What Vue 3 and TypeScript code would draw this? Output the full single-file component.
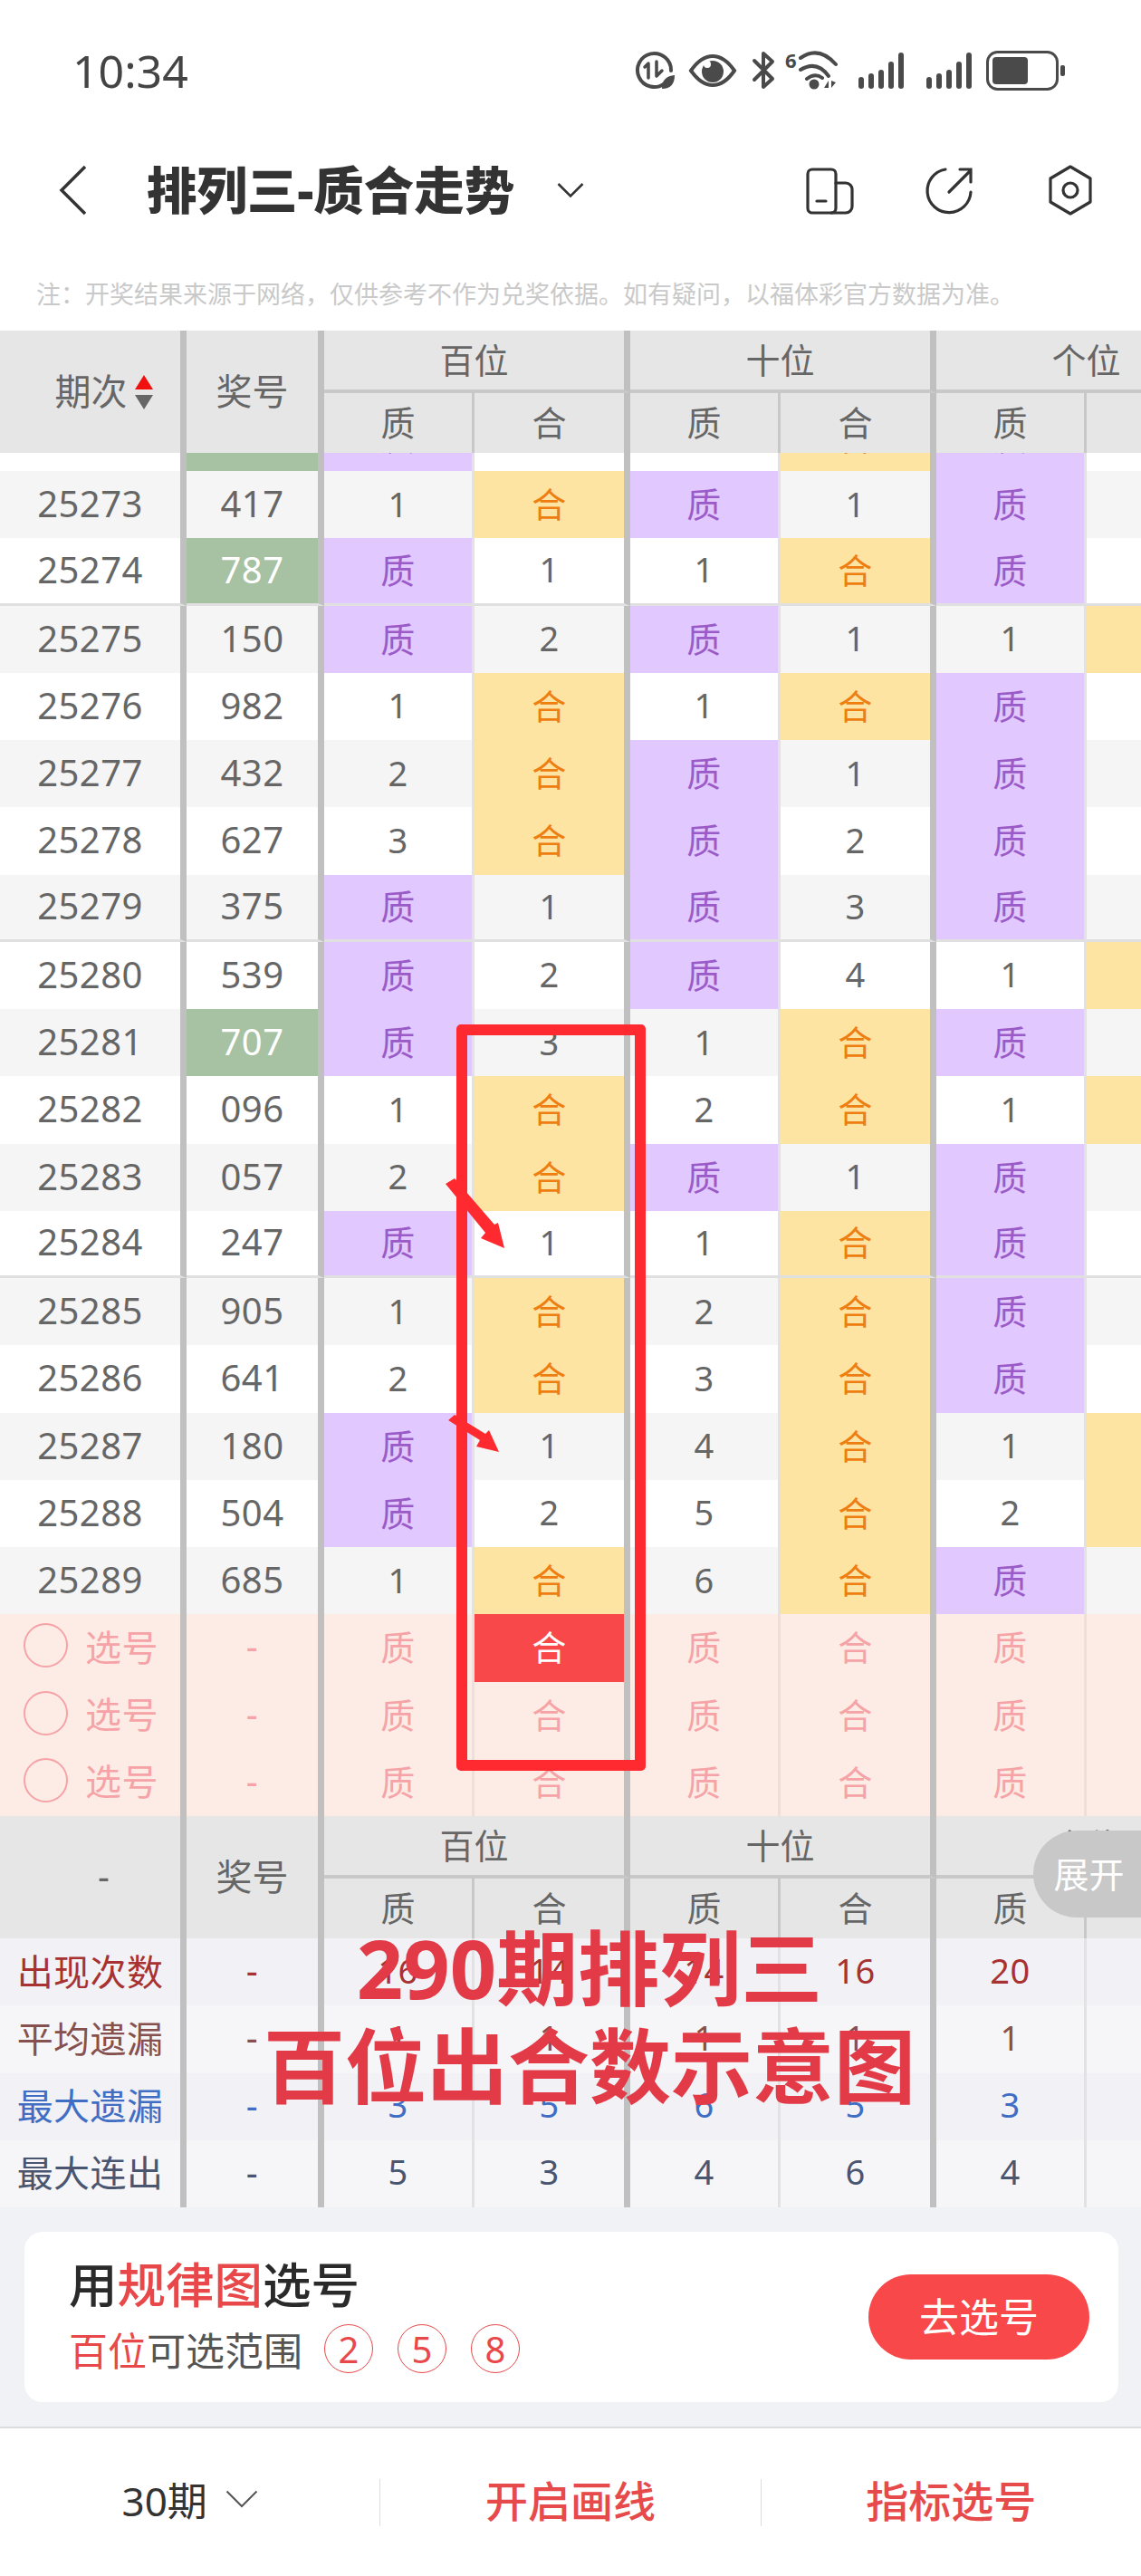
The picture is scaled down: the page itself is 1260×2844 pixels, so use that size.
<script setup lang="ts">
type Row = { no: string; prize: string; hot?: boolean; split?: boolean; cells: string[] }

const raw: [string, string, string][] = [
  ['25272', '747', '质 1 1 合 质 1'],
  ['25273', '417', '1 合 质 1 质 1'],
  ['25274', '787', '质 1 1 合 质 2'],
  ['25275', '150', '质 2 质 1 1 合'],
  ['25276', '982', '1 合 1 合 质 1'],
  ['25277', '432', '2 合 质 1 质 2'],
  ['25278', '627', '3 合 质 2 质 3'],
  ['25279', '375', '质 1 质 3 质 4'],
  ['25280', '539', '质 2 质 4 1 合'],
  ['25281', '707', '质 3 1 合 质 1'],
  ['25282', '096', '1 合 2 合 1 合'],
  ['25283', '057', '2 合 质 1 质 1'],
  ['25284', '247', '质 1 1 合 质 2'],
  ['25285', '905', '1 合 2 合 质 3'],
  ['25286', '641', '2 合 3 合 质 4'],
  ['25287', '180', '质 1 4 合 1 合'],
  ['25288', '504', '质 2 5 合 2 合'],
  ['25289', '685', '1 合 6 合 质 1'],
]

const rows: Row[] = raw.map(([no, prize, cells]) => ({
  no,
  prize,
  hot: ['747', '787', '707'].includes(prize),
  split: ['25274', '25279', '25284'].includes(no),
  cells: cells.split(' '),
}))

const groups = ['百位', '十位', '个位']
const subs = ['质', '合', '质', '合', '质', '合']
const picks = [0, 1, 2]

const stats = [
  { label: '出现次数', tone: 'red', values: ['16', '14', '14', '16', '20', '10'] },
  { label: '平均遗漏', tone: 'brown', values: ['1', '1', '1', '1', '1', '2'] },
  { label: '最大遗漏', tone: 'blue', values: ['3', '5', '6', '5', '3', '6'] },
  { label: '最大连出', tone: 'slate', values: ['5', '3', '4', '6', '4', '2'] },
]

function tint(v: string) {
  if (v === '质') return 'zhi'
  if (v === '合') return 'he'
  return ''
}
</script>

<template>
  <div class="page">
    <div class="status">
      <span class="time">10:34</span>
      <svg class="status-icons" viewBox="700 50 480 56" width="480" height="56">
        <g fill="none" stroke="#4a4a4a" stroke-width="4" stroke-linecap="round">
          <path d="M734 92 A18.5 18.5 0 1 1 741 78" />
          <path d="M716 70 V86 M716 70 L712 74 M725 68 V84 M725 84 L731 78" stroke-width="3.5" />
          <path d="M763 78 C772 65 780 62 787 62 C794 62 802 65 811 78 C802 91 794 94 787 94 C780 94 772 91 763 78Z" />
          <path d="M833 67 L853 87 L843 96 V59 L853 68 L833 88" stroke-linejoin="round" />
          <path d="M884 64 Q904 50 923 71 M884 77 Q902 66 915 84 M891 87 Q900 80 908 86" />
        </g>
        <path d="M731 98 C731 88 736 84 745 83 C745 92 741 98 731 98Z" fill="#4a4a4a" />
        <circle cx="787" cy="79" r="12" fill="#4a4a4a" />
        <circle cx="781" cy="71" r="4" fill="#fff" />
        <text x="867" y="75" class="wifi-six">6</text>
        <circle cx="899" cy="93" r="5.5" fill="#4a4a4a" />
        <path d="M910 97 L915 89 V97Z M918 89 V97 L923 91Z" fill="#4a4a4a" />
        <g fill="#4a4a4a">
          <rect x="948" y="85" width="6" height="13" rx="3" />
          <rect x="959" y="81" width="6" height="17" rx="3" />
          <rect x="970" y="77" width="6" height="21" rx="3" />
          <rect x="981" y="68" width="6" height="30" rx="3" />
          <rect x="992" y="58" width="6" height="40" rx="3" />
          <rect x="1023" y="85" width="6" height="13" rx="3" />
          <rect x="1034" y="81" width="6" height="17" rx="3" />
          <rect x="1045" y="77" width="6" height="21" rx="3" />
          <rect x="1056" y="68" width="6" height="30" rx="3" />
          <rect x="1067" y="58" width="6" height="40" rx="3" />
          <rect x="1096" y="63" width="39" height="30" rx="4" />
          <rect x="1171" y="72" width="5" height="12" rx="2" />
        </g>
        <rect x="1090.5" y="57.5" width="77" height="41" rx="11" fill="none" stroke="#4a4a4a" stroke-width="3" />
      </svg>
    </div>

    <div class="nav">
      <svg class="back" viewBox="0 0 32 56" width="32" height="56">
        <path d="M29 2 L3 28 L29 54" fill="none" stroke="#333" stroke-width="3.5" />
      </svg>
      <h1 class="title">排列三-质合走势</h1>
      <svg class="caret" viewBox="0 0 30 16" width="30" height="16">
        <path d="M1.5 1 L15 14.5 L28.5 1" fill="none" stroke="#333" stroke-width="2.5" />
      </svg>
      <div class="nav-icons">
        <svg viewBox="0 0 56 56" width="56" height="56" fill="none" stroke="#333" stroke-width="3.2" stroke-linecap="round">
          <rect x="4" y="5" width="31" height="48" rx="5" />
          <path d="M35 20 H46 A7 7 0 0 1 53 27 V46 A7 7 0 0 1 46 53 H30" />
          <path d="M14 40 H24" />
        </svg>
        <svg viewBox="0 0 56 56" width="56" height="56" fill="none" stroke="#333" stroke-width="3.2" stroke-linecap="round">
          <path d="M23 5 A24 24 0 1 0 51 30" />
          <path d="M27 30 L51 6 M39 5 H51 V19" />
        </svg>
        <svg viewBox="0 0 56 56" width="56" height="56" fill="none" stroke="#333" stroke-width="3.2" stroke-linejoin="round">
          <path d="M28 2 L50 15 V41 L28 54 L6 41 V15Z" />
          <circle cx="28" cy="28" r="8" />
        </svg>
      </div>
    </div>

    <p class="note">注：开奖结果来源于网络，仅供参考不作为兑奖依据。如有疑问，以福体彩官方数据为准。</p>

    <div class="table">
      <div class="head">
        <div class="h-side">
          <span>期次</span>
          <span class="sort"><i class="up"></i><i class="down"></i></span>
        </div>
        <div class="h-prize">奖号</div>
        <div v-for="g in groups" :key="g" class="h-group">{{ g }}</div>
        <div v-for="(s, i) in subs" :key="i" class="h-sub" :class="{ end: i % 2 === 1 }">{{ s }}</div>
      </div>

      <div class="body">
        <div v-for="r in rows" :key="r.no" class="row" :class="{ split: r.split }">
          <div class="c side">{{ r.no }}</div>
          <div class="c prize" :class="{ hot: r.hot }">{{ r.prize }}</div>
          <div
            v-for="(v, i) in r.cells"
            :key="i"
            class="c"
            :class="[tint(v), i % 2 === 1 ? 'end' : 'mid']"
          >{{ v }}</div>
        </div>
      </div>

      <div v-for="p in picks" :key="p" class="row pick">
        <div class="c side"><span class="ring"></span><span>选号</span></div>
        <div class="c prize">-</div>
        <div
          v-for="(s, i) in subs"
          :key="i"
          class="c"
          :class="[i % 2 === 1 ? 'end' : 'mid', { picked: p === 0 && i === 1 }]"
        >{{ s }}</div>
      </div>

      <div class="head">
        <div class="h-side">-</div>
        <div class="h-prize">奖号</div>
        <div v-for="g in groups" :key="g" class="h-group">{{ g }}</div>
        <div v-for="(s, i) in subs" :key="i" class="h-sub" :class="{ end: i % 2 === 1 }">{{ s }}</div>
      </div>

      <div v-for="s in stats" :key="s.label" class="row stat" :class="s.tone">
        <div class="c side">{{ s.label }}</div>
        <div class="c prize">-</div>
        <div v-for="(v, i) in s.values" :key="i" class="c" :class="i % 2 === 1 ? 'end' : 'mid'">{{ v }}</div>
      </div>
    </div>

    <div class="panel">
      <div class="card">
        <div class="card-text">
          <div class="card-title">用<em>规律图</em>选号</div>
          <div class="card-range">
            <em>百位</em>可选范围
            <span class="balls">
              <b>2</b>
              <b>5</b>
              <b>8</b>
            </span>
          </div>
        </div>
        <button class="go">去选号</button>
      </div>
    </div>

    <div class="bar">
      <div class="bar-item period">
        <span>30期</span>
        <svg viewBox="0 0 36 20" width="36" height="20">
          <path d="M1.5 1.5 L18 18 L34.5 1.5" fill="none" stroke="#555" stroke-width="2" />
        </svg>
      </div>
      <div class="bar-item link">开启画线</div>
      <div class="bar-item link">指标选号</div>
    </div>

    <div class="expand">展开</div>
    <div class="mark-box"></div>
    <svg class="mark-arrows" viewBox="480 1290 90 330" width="90" height="330">
      <path d="M492 1307 L502 1301 L546 1352 L550 1350 L557 1378 L531 1367 L536 1361Z" fill="#ff2a2f" />
      <path d="M495 1568 L502 1562 L536 1583 L540 1579 L551 1603 L526 1597 L530 1590Z" fill="#ff2a2f" />
    </svg>
    <div class="caption">290期排列三<br />百位出合数示意图</div>
  </div>
</template>

<style>
html, body { margin: 0; background: #fff; }
</style>

<style scoped>
.page {
  position: relative; width: 1260px; height: 2844px; overflow: hidden; background: #fff;
  font-family: "Noto Sans", "Noto Sans CJK SC", sans-serif; color: #666;
}

.status { display: flex; align-items: center; justify-content: space-between; height: 156px; padding: 0 80px; box-sizing: border-box; }
.time { font-size: 50px; color: #444; }
.status-icons { display: block; }
.wifi-six { font-size: 22px; font-weight: 700; fill: #4a4a4a; }

.nav { display: flex; align-items: center; height: 108px; padding: 0 50px 0 65px; box-sizing: border-box; }
.title { margin: 0 0 0 65px; font-size: 55.5px; font-weight: 900; color: #333; line-height: 1; white-space: nowrap; }
.caret { margin-left: 47px; }
.nav-icons { display: flex; gap: 77px; margin-left: auto; }

.note { margin: 0; height: 101px; padding: 44px 0 0 40px; box-sizing: border-box; font-size: 27px; line-height: 34px; color: #c9c9c9; white-space: nowrap; }

.table { width: 1260px; overflow: hidden; }
.head {
  display: grid; width: 1372px; height: 135px; background: #e6e6e6;
  grid-template-columns: 206px 152px 166px 172px 166px 172px 166px 172px;
  grid-template-rows: 69px 66px;
  font-size: 38px;
}
.h-side, .h-prize { grid-row: 1 / 3; display: flex; align-items: center; justify-content: center; box-sizing: border-box; padding-bottom: 5px; border-right: 7px solid #c0c0c0; font-size: 40px; }
.h-side { gap: 8px; padding-left: 30px; }
.h-side:only-child { padding-left: 0; }
.h-group { grid-column: span 2; display: flex; align-items: center; justify-content: center; box-sizing: border-box; padding-bottom: 5px; border-right: 7px solid #c0c0c0; border-bottom: 4px solid #c8c8c8; }
.h-sub { display: flex; align-items: center; justify-content: center; box-sizing: border-box; padding-bottom: 5px; border-right: 3px solid #c8c8c8; }
.h-sub.end { border-right: 7px solid #c0c0c0; }
.sort { display: flex; flex-direction: column; gap: 6px; padding-top: 5px; }
.sort i { display: block; width: 0; height: 0; border-left: 10px solid transparent; border-right: 10px solid transparent; }
.sort .up { border-bottom: 16px solid #f01010; }
.sort .down { border-top: 16px solid #666; }

.body { overflow: hidden; }
.row {
  display: grid; width: 1372px; height: 74.25px; background: #fff;
  grid-template-columns: 206px 152px 166px 172px 166px 172px 166px 172px;
  font-size: 40px; letter-spacing: 0.4px;
}
.body .row:first-child { margin-top: -54.25px; }
.body .row:nth-child(even) { background: #f5f5f5; }
.row.split .c { border-bottom: 3px solid #e0e0e0; }
.c { display: flex; align-items: center; justify-content: center; box-sizing: border-box; padding-bottom: 3px; border-right: 7px solid #c0c0c0; background-clip: padding-box; }
.c.mid { border-right: 3px solid #e2e2e2; font-size: 38px; }
.c.end { font-size: 38px; }
.zhi, .he { padding-bottom: 5px; }
.zhi { background-color: #e1c8ff; color: #9a5bc8; }
.he { background-color: #fee4a2; color: #ee7d12; }
.prize.hot { background-color: #a7c1a3; color: #fff; }

.pick { background: #fdece6; color: #f6a3a7; }
.pick .c { padding-bottom: 5px; }
.pick .c.mid { border-right-color: #ecdfdc; }
.pick .c.picked { background-color: #f9484a; color: #fff; border-image: linear-gradient(90deg, #f9484a 43%, #c0c0c0 43%) 1; }
.pick .side { justify-content: flex-start; gap: 19px; padding-left: 26px; }
.ring { width: 49px; height: 49px; box-sizing: border-box; border: 2.5px solid #f6a3a7; border-radius: 50%; }

.stat { background: #f6f6f8; color: #4a5570; }
.stat .c { padding-bottom: 5px; }
.stat:nth-last-child(even) { background: #f1f1f6; }
.red { color: #a83232; }
.brown { color: #86504e; }
.blue { color: #3f6ec4; }

.panel { height: 244px; padding: 27px 25px 0 27px; box-sizing: border-box; background: #f1f2f6; border-bottom: 2px solid #dcdcdc; }
.card { display: flex; align-items: center; justify-content: space-between; height: 188px; padding: 0 32px 0 49px; box-sizing: border-box; background: #fff; border-radius: 20px; }
.card em { font-style: normal; color: #e8484a; }
.card-text { padding-bottom: 8px; }
.card-title { font-size: 53.5px; line-height: 70px; font-weight: 500; color: #2a2a2a; }
.card-range { display: flex; align-items: center; height: 54px; margin-top: 8px; font-size: 43px; color: #555; }
.balls { display: flex; gap: 27px; margin-left: 24px; }
.balls b { display: flex; align-items: center; justify-content: center; width: 54px; height: 54px; box-sizing: border-box; border: 1.5px solid #e8484a; border-radius: 50%; font-size: 40px; font-weight: 400; color: #e8484a; }
.go { width: 244px; height: 94px; padding: 0 0 4px; border: none; border-radius: 47px; background: #f8484a; color: #fff; font: inherit; font-size: 44px; }

.bar { display: flex; align-items: center; height: 163px; }
.bar-item { display: flex; align-items: center; justify-content: center; gap: 20px; flex: 1; height: 44px; padding-bottom: 8px; font-size: 47px; }
.bar-item + .bar-item { border-left: 1px solid #ddd; }
.period { font-size: 44px; color: #333; }
.link { font-weight: 500; color: #e64a4a; }

.expand {
  position: absolute; left: 1141px; top: 2021px; width: 119px; height: 96px;
  display: flex; align-items: center; justify-content: center; padding: 0 0 4px 4px; box-sizing: border-box;
  border-radius: 48px 0 0 48px; background: #c8c8c8; color: #fff; font-size: 39px;
}
.mark-box { position: absolute; left: 504px; top: 1131px; width: 209px; height: 824px; box-sizing: border-box; border: 12px solid #ff2a2f; border-radius: 5px; }
.mark-arrows { position: absolute; left: 480px; top: 1290px; }
.caption { position: absolute; left: 151px; top: 2118px; width: 1000px; text-align: center; font-size: 90px; line-height: 108px; font-weight: 700; color: #e23a46; }
</style>
